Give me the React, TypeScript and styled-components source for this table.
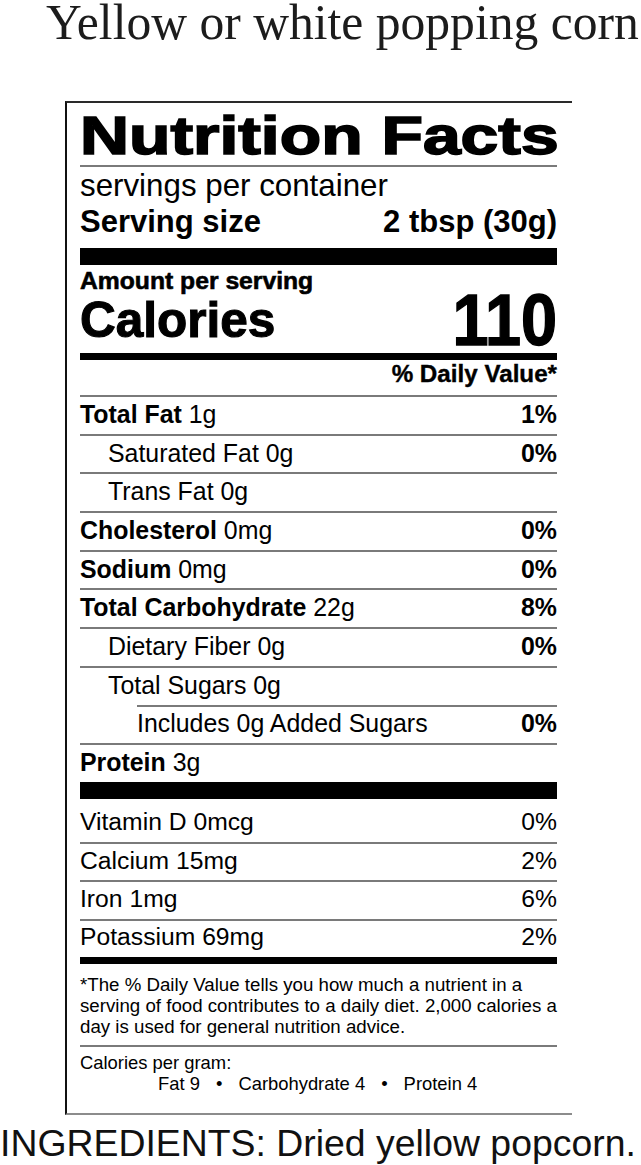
import React from 'react';
import styled, { createGlobalStyle } from 'styled-components';

const GlobalStyle = createGlobalStyle`
  html, body {
    margin: 0;
    padding: 0;
    background: #fff;
  }
  body {
    font-family: "Liberation Sans", Arial, sans-serif;
    color: #000;
  }
`;

const Page = styled.div`
  width: 641px;
  height: 1165px;
  overflow: hidden;
`;

const Title = styled.h1`
  margin: 0 0 0 46px;
  font-family: "Liberation Serif", "Times New Roman", serif;
  font-weight: 400;
  font-size: 49.6px;
  line-height: 46px;
  color: #1c1c1c;
  white-space: nowrap;
`;

const Label = styled.section`
  box-sizing: border-box;
  width: 507px;
  margin: 55px 0 0 65px;
  padding: 0 15px 0 13px;
  border-top: 2px solid #2a2a2a;
  border-left: 2px solid #111;
  border-bottom: 2px solid #8c8c8c;
`;

const Heading = styled.div`
  box-sizing: border-box;
  height: 62px;
  padding-top: 3px;
  font-size: 53px;
  line-height: 59px;
  font-weight: 700;
  -webkit-text-stroke: 1.6px #000;
  white-space: nowrap;
  transform: scaleX(1.28);
  transform-origin: left center;
`;

const Rule = styled.div<{ $inset?: number }>`
  height: 2px;
  margin-left: ${p => p.$inset ?? 0}px;
  background: #7a7a7a;
`;

const Bar = styled.div<{ $h: number }>`
  height: ${p => p.$h}px;
  background: #000;
`;

const Servings = styled.div`
  padding-top: 3px;
  font-size: 31.3px;
  line-height: 32px;
`;

const ServingSize = styled.div`
  display: flex;
  justify-content: space-between;
  margin-bottom: 10px;
  padding-top: 4px;
  font-size: 31px;
  font-weight: 700;
  line-height: 32px;
`;

const Amount = styled.div`
  padding-top: 3px;
  font-size: 24.7px;
  line-height: 26px;
  font-weight: 700;
  -webkit-text-stroke: 0.6px #000;
`;

const CaloriesRow = styled.div`
  display: flex;
  justify-content: space-between;
  align-items: flex-start;
  height: 52px;
  margin-bottom: 7px;
  font-weight: 700;
  line-height: 52px;
`;

const CaloriesWord = styled.span`
  font-size: 49.5px;
  -webkit-text-stroke: 1.1px #000;
`;

const CaloriesValue = styled.span`
  display: inline-block;
  font-size: 72px;
  -webkit-text-stroke: 1.4px #000;
  transform: scaleX(0.9);
  transform-origin: right center;
`;

const DailyHead = styled.div`
  box-sizing: border-box;
  height: 35px;
  padding-bottom: 7px;
  text-align: right;
  font-size: 24.2px;
  line-height: 28px;
  font-weight: 700;
  -webkit-text-stroke: 0.4px #000;
`;

const NutrientRow = styled.div<{ $inset: number; $indent: number }>`
  box-sizing: border-box;
  display: flex;
  align-items: center;
  justify-content: space-between;
  height: 38.7px;
  margin-left: ${p => p.$inset}px;
  padding-left: ${p => p.$indent - p.$inset}px;
  padding-bottom: 3px;
  border-top: 2px solid #7a7a7a;
  font-size: 24.9px;
  line-height: 28px;
  white-space: nowrap;
`;

const Name = styled.span<{ $bold?: boolean }>`
  font-weight: ${p => (p.$bold ? 700 : 400)};
`;

const Percent = styled.span<{ $bold?: boolean }>`
  font-weight: ${p => (p.$bold ? 700 : 400)};
`;

const MineralRow = styled.div<{ $first?: boolean }>`
  box-sizing: border-box;
  display: flex;
  align-items: center;
  justify-content: space-between;
  height: ${p => (p.$first ? 43 : 38.4)}px;
  padding-top: ${p => (p.$first ? 4 : 0)}px;
  padding-bottom: ${p => (p.$first ? 0 : 3)}px;
  border-top: ${p => (p.$first ? 'none' : '2px solid #7a7a7a')};
  font-size: 24.7px;
  line-height: 28px;
  white-space: nowrap;
`;

const Footnote = styled.p`
  margin: 0;
  padding: 10px 0 8px;
  font-size: 18.7px;
  line-height: 21px;
  white-space: nowrap;
`;

const PerGram = styled.div`
  padding: 6px 0 19px;
  font-size: 18.4px;
  line-height: 20.5px;
  white-space: nowrap;
`;

const GramList = styled.div`
  display: flex;
  gap: 16px;
  padding-left: 78px;
`;

const Ingredients = styled.p`
  margin: 8px 0 0;
  font-size: 37.4px;
  line-height: 40px;
  color: #111;
  white-space: nowrap;
`;

type Nutrient = {
  name: string;
  amount: string;
  dv?: string;
  bold?: boolean;
  indent: number;
  inset?: number;
};

const nutrients: Nutrient[] = [
  { name: 'Total Fat', amount: '1g', dv: '1%', bold: true, indent: 0 },
  { name: 'Saturated Fat', amount: '0g', dv: '0%', indent: 28 },
  { name: 'Trans Fat', amount: '0g', indent: 28 },
  { name: 'Cholesterol', amount: '0mg', dv: '0%', bold: true, indent: 0 },
  { name: 'Sodium', amount: '0mg', dv: '0%', bold: true, indent: 0 },
  { name: 'Total Carbohydrate', amount: '22g', dv: '8%', bold: true, indent: 0 },
  { name: 'Dietary Fiber', amount: '0g', dv: '0%', indent: 28 },
  { name: 'Total Sugars', amount: '0g', indent: 28 },
  { name: 'Includes 0g Added Sugars', amount: '', dv: '0%', indent: 57, inset: 57 },
  { name: 'Protein', amount: '3g', bold: true, indent: 0 },
];

const minerals = [
  { name: 'Vitamin D', amount: '0mcg', dv: '0%' },
  { name: 'Calcium', amount: '15mg', dv: '2%' },
  { name: 'Iron', amount: '1mg', dv: '6%' },
  { name: 'Potassium', amount: '69mg', dv: '2%' },
];

const App = () => {
  return (
    <Page>
      <GlobalStyle />
      <Title>Yellow or white popping corn</Title>

      <Label>
        <Heading>Nutrition Facts</Heading>
        <Rule />
        <Servings>servings per container</Servings>
        <ServingSize>
          <span>Serving size</span>
          <span>2 tbsp (30g)</span>
        </ServingSize>
        <Bar $h={17} />

        <Amount>Amount per serving</Amount>
        <CaloriesRow>
          <CaloriesWord>Calories</CaloriesWord>
          <CaloriesValue>110</CaloriesValue>
        </CaloriesRow>
        <Bar $h={7} />
        <DailyHead>% Daily Value*</DailyHead>

        {nutrients.map(n => (
          <NutrientRow key={n.name} $inset={n.inset ?? 0} $indent={n.indent}>
            <span>
              <Name $bold={n.bold}>{n.name}</Name>
              {n.amount && ` ${n.amount}`}
            </span>
            {n.dv && <Percent $bold>{n.dv}</Percent>}
          </NutrientRow>
        ))}
        <Bar $h={17} />

        {minerals.map((m, i) => (
          <MineralRow key={m.name} $first={i === 0}>
            <span>{m.name} {m.amount}</span>
            <Percent>{m.dv}</Percent>
          </MineralRow>
        ))}
        <Bar $h={7} />

        <Footnote>
          *The % Daily Value tells you how much a nutrient in a<br />
          serving of food contributes to a daily diet. 2,000 calories a<br />
          day is used for general nutrition advice.
        </Footnote>
        <Rule />
        <PerGram>
          Calories per gram:
          <GramList>
            <span>Fat 9</span>
            <span>•</span>
            <span>Carbohydrate 4</span>
            <span>•</span>
            <span>Protein 4</span>
          </GramList>
        </PerGram>
      </Label>

      <Ingredients>INGREDIENTS: Dried yellow popcorn.</Ingredients>
    </Page>
  );
};

export default App;
